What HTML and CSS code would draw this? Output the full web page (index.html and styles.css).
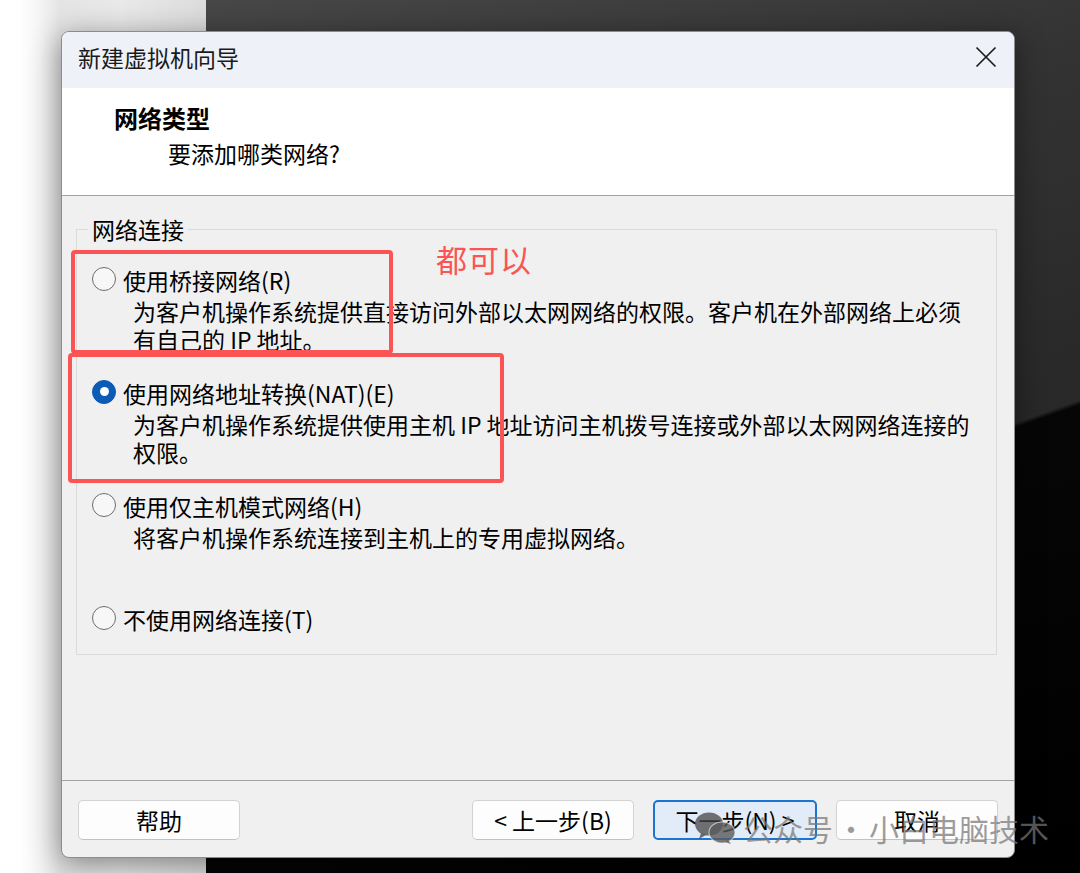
FILE: index.html
```html
<!DOCTYPE html>
<html lang="zh-CN">
<head>
<meta charset="utf-8">
<title>新建虚拟机向导</title>
<link rel="stylesheet" href="styles.css">
</head>
<body>
<div class="desktop">
  <div class="desk-left"></div>
  <div class="desk-right"></div>
</div>

<div class="dialog">
  <div class="titlebar">
    <span class="title">新建虚拟机向导</span>
    <button class="close" aria-label="关闭">
      <svg viewBox="0 0 22 22" width="22" height="22"><path d="M1.5 1.5 L20.5 20.5 M20.5 1.5 L1.5 20.5" stroke="#1c1c1c" stroke-width="1.7" fill="none"/></svg>
    </button>
  </div>

  <div class="header">
    <div class="h-title">网络类型</div>
    <div class="h-sub">要添加哪类网络?</div>
  </div>

  <div class="content">
    <fieldset class="group">
      <legend>网络连接</legend>
      <div class="options">
        <div class="option">
          <div class="opt-label"><span class="radio"></span>使用桥接网络(R)</div>
          <div class="opt-desc">为客户机操作系统提供直接访问外部以太网网络的权限。客户机在外部网络上必须<br>有自己的 IP 地址。</div>
        </div>
        <div class="option">
          <div class="opt-label"><span class="radio checked"></span>使用网络地址转换(NAT)(E)</div>
          <div class="opt-desc">为客户机操作系统提供使用主机 IP 地址访问主机拨号连接或外部以太网网络连接的<br>权限。</div>
        </div>
        <div class="option">
          <div class="opt-label"><span class="radio"></span>使用仅主机模式网络(H)</div>
          <div class="opt-desc">将客户机操作系统连接到主机上的专用虚拟网络。</div>
        </div>
        <div class="option">
          <div class="opt-label"><span class="radio"></span>不使用网络连接(T)</div>
        </div>
      </div>
    </fieldset>
  </div>

  <div class="footer">
    <button class="btn help">帮助</button>
    <button class="btn">&lt; 上一步(B)</button>
    <button class="btn primary">下一步(N) &gt;</button>
    <button class="btn">取消</button>
  </div>
</div>

<div class="mark mark-one"></div>
<div class="mark mark-two"></div>
<div class="note">都可以</div>

<div class="watermark">
  <svg class="wx" viewBox="0 0 44 34" width="44" height="34">
    <ellipse cx="16" cy="13" rx="14" ry="11.5" fill="rgba(70,70,70,0.75)"/>
    <path d="M8 22 L6 28 L13 24 Z" fill="rgba(70,70,70,0.75)"/>
    <ellipse cx="29" cy="21.5" rx="13" ry="10.5" fill="rgba(90,90,90,0.8)" stroke="rgba(240,240,240,0.6)" stroke-width="1.2"/>
    <path d="M35 29 L38 33 L32 31 Z" fill="rgba(90,90,90,0.8)"/>
  </svg>
  <span class="wm-text">公众号</span><span class="wm-dot">·</span><span class="wm-text">小白电脑技术</span>
</div>
</body>
</html>
```

FILE: styles.css
```css
* {
  box-sizing: border-box;
}

html,
body {
  margin: 0;
  padding: 0;
}

body {
  width: 1080px;
  height: 873px;
  overflow: hidden;
  position: relative;
  font-family: "Noto Sans CJK SC", "Noto Sans", sans-serif;
  font-size: 23px;
  color: #000;
  background: #000;
}

/* desktop background */
.desktop {
  display: flex;
  width: 1080px;
  height: 873px;
}

.desk-left {
  width: 206px;
  background: linear-gradient(to right, #ffffff 0, #ffffff 20px, #f4f4f4 40px, #e4e4e4 60px, #e9e9e9 120px, #dcdcdc 206px);
}

.desk-right {
  flex: 1;
  background: linear-gradient(160.5deg, #474747 0%, #333333 30%, #282828 60%, #060606 60.4%, #000000 100%);
}

/* dialog window */
.dialog {
  position: absolute;
  left: 61px;
  top: 31px;
  width: 954px;
  height: 827px;
  border: 1px solid #8c8c8c;
  border-radius: 8px;
  background: #f0f0f0;
  overflow: hidden;
  display: flex;
  flex-direction: column;
  box-shadow: 0 6px 30px rgba(0, 0, 0, 0.45);
}

.titlebar {
  flex: none;
  height: 56px;
  background: #eef1f8;
  display: flex;
  justify-content: space-between;
  align-items: flex-start;
  padding: 11px 17px 0 16px;
}

.title {
  line-height: 28px;
  color: #1a1a1a;
}

.close {
  width: 22px;
  height: 22px;
  margin-top: 3px;
  padding: 0;
  border: 0;
  background: none;
  display: block;
}

.close svg {
  display: block;
}

.header {
  flex: none;
  height: 108px;
  background: #ffffff;
  border-bottom: 1px solid #a3a3a3;
  padding-top: 16px;
}

.h-title {
  font-size: 24px;
  font-weight: 700;
  line-height: 28px;
  padding-left: 52px;
}

.h-sub {
  line-height: 28px;
  margin-top: 7px;
  padding-left: 106px;
}

.content {
  flex: 1;
  padding: 19px 17px 0 14px;
}

.group {
  margin: 0;
  min-width: 0;
  border: 1px solid #dadada;
  padding: 23px 15px 21px 15px;
}

.group legend {
  padding: 0 4px;
  margin-left: -4px;
  line-height: 28px;
}

.options {
  display: flex;
  flex-direction: column;
  gap: 26px;
}

.opt-label {
  display: flex;
  align-items: center;
  height: 28px;
  line-height: 28px;
  white-space: nowrap;
}

.radio {
  flex: none;
  width: 24px;
  height: 24px;
  margin-right: 7px;
  margin-top: -3px;
  border: 1.5px solid #6e6e6e;
  border-radius: 50%;
  background: #f7f7f7;
  position: relative;
}

.radio.checked {
  background: #0c5cb6;
  border-color: #0c5cb6;
}

.radio.checked::after {
  content: "";
  position: absolute;
  left: 50%;
  top: 50%;
  width: 9px;
  height: 9px;
  margin: -4.5px 0 0 -4.5px;
  border-radius: 50%;
  background: #ffffff;
}

.opt-desc {
  margin-top: 3px;
  padding-left: 41px;
  line-height: 28px;
  min-height: 56px;
  white-space: nowrap;
}

.footer {
  flex: none;
  height: 77px;
  border-top: 1px solid #a3a3a3;
  display: flex;
  align-items: flex-start;
  gap: 19px;
  padding: 19px 16px 0 16px;
}

.btn {
  width: 162px;
  height: 40px;
  border: 1px solid #d2d2d2;
  border-bottom-color: #c2c2c2;
  border-radius: 5px;
  background: #fdfdfd;
  font-family: inherit;
  font-size: 23px;
  color: #000;
  padding: 0;
  line-height: 36px;
}

.btn.help {
  margin-right: auto;
}

.btn.primary {
  width: 164px;
  border: 2px solid #1b74d0;
  background: #e2ecf8;
  line-height: 34px;
}

/* annotations */
.mark {
  position: absolute;
  border: 4px solid #fa5454;
  border-radius: 4px;
}

.mark-one {
  left: 71px;
  top: 250px;
  width: 322px;
  height: 104px;
}

.mark-two {
  left: 68px;
  top: 353px;
  width: 436px;
  height: 130px;
}

.note {
  position: absolute;
  left: 436px;
  top: 240px;
  font-size: 31px;
  line-height: 38px;
  color: #f95555;
  letter-spacing: 1px;
}

.watermark {
  position: absolute;
  left: 693px;
  top: 810px;
  display: flex;
  align-items: center;
  color: rgba(118, 118, 118, 0.72);
  font-size: 30px;
  line-height: 36px;
  white-space: nowrap;
}

.wx {
  flex: none;
  margin-right: 6px;
}

.wm-dot {
  padding: 0 3px;
}
```
